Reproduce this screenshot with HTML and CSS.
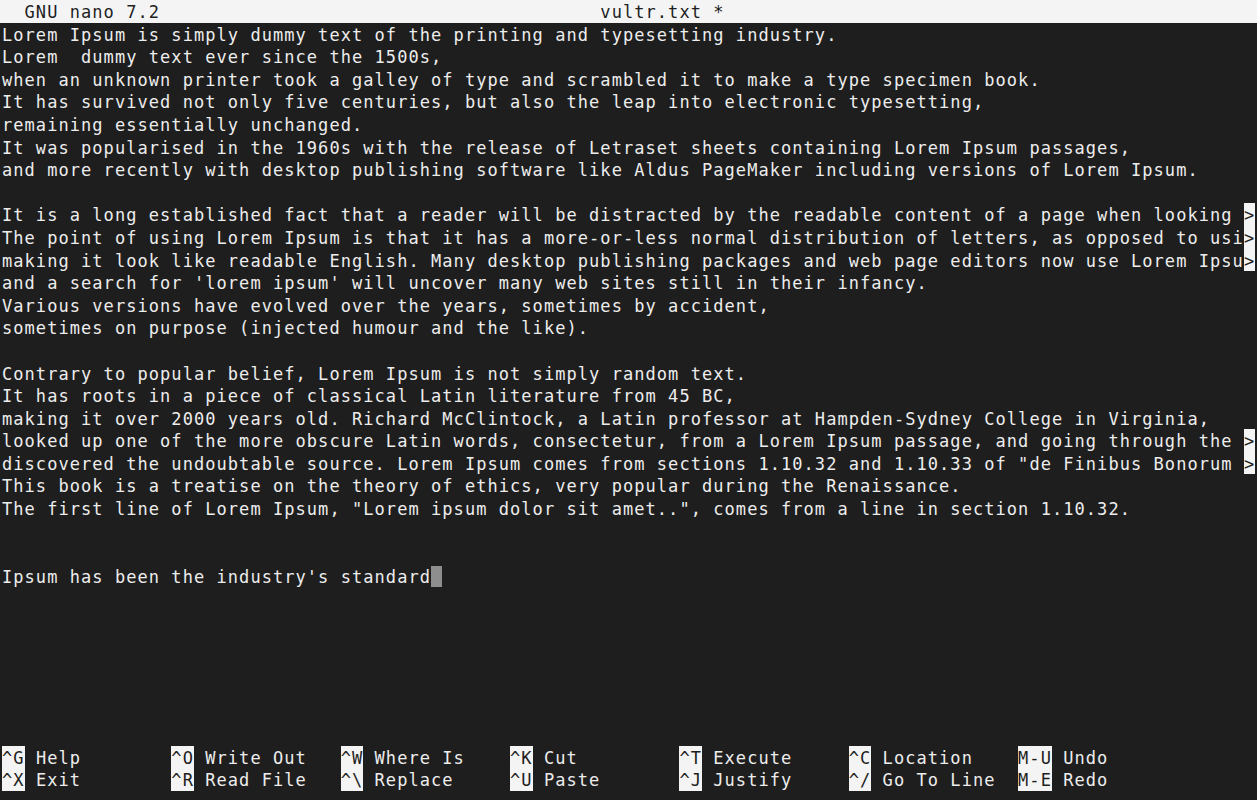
FILE: index.html
```html
<!DOCTYPE html>
<html lang="en">
<head>
<meta charset="utf-8">
<title>GNU nano 7.2 - vultr.txt</title>
<link rel="stylesheet" href="styles.css">
</head>
<body>
<main class="terminal">
  <header class="titlebar"><span class="title-line">  GNU nano 7.2                                       vultr.txt *</span></header>
  <section class="buffer">
    <div class="line">Lorem Ipsum is simply dummy text of the printing and typesetting industry.</div>
    <div class="line">Lorem  dummy text ever since the 1500s,</div>
    <div class="line">when an unknown printer took a galley of type and scrambled it to make a type specimen book.</div>
    <div class="line">It has survived not only five centuries, but also the leap into electronic typesetting,</div>
    <div class="line">remaining essentially unchanged.</div>
    <div class="line">It was popularised in the 1960s with the release of Letraset sheets containing Lorem Ipsum passages,</div>
    <div class="line">and more recently with desktop publishing software like Aldus PageMaker including versions of Lorem Ipsum.</div>
    <div class="line"></div>
    <div class="line">It is a long established fact that a reader will be distracted by the readable content of a page when looking <span class="more">&gt;</span></div>
    <div class="line">The point of using Lorem Ipsum is that it has a more-or-less normal distribution of letters, as opposed to usi<span class="more">&gt;</span></div>
    <div class="line">making it look like readable English. Many desktop publishing packages and web page editors now use Lorem Ipsu<span class="more">&gt;</span></div>
    <div class="line">and a search for 'lorem ipsum' will uncover many web sites still in their infancy.</div>
    <div class="line">Various versions have evolved over the years, sometimes by accident,</div>
    <div class="line">sometimes on purpose (injected humour and the like).</div>
    <div class="line"></div>
    <div class="line">Contrary to popular belief, Lorem Ipsum is not simply random text.</div>
    <div class="line">It has roots in a piece of classical Latin literature from 45 BC,</div>
    <div class="line">making it over 2000 years old. Richard McClintock, a Latin professor at Hampden-Sydney College in Virginia,</div>
    <div class="line">looked up one of the more obscure Latin words, consectetur, from a Lorem Ipsum passage, and going through the <span class="more">&gt;</span></div>
    <div class="line">discovered the undoubtable source. Lorem Ipsum comes from sections 1.10.32 and 1.10.33 of "de Finibus Bonorum <span class="more">&gt;</span></div>
    <div class="line">This book is a treatise on the theory of ethics, very popular during the Renaissance.</div>
    <div class="line">The first line of Lorem Ipsum, "Lorem ipsum dolor sit amet..", comes from a line in section 1.10.32.</div>
    <div class="line"></div>
    <div class="line"></div>
    <div class="line">Ipsum has been the industry's standard<span class="cursor"> </span></div>
  </section>
  <section class="help">
    <div class="help-item"><span class="key">^G</span> Help</div>
    <div class="help-item"><span class="key">^O</span> Write Out</div>
    <div class="help-item"><span class="key">^W</span> Where Is</div>
    <div class="help-item"><span class="key">^K</span> Cut</div>
    <div class="help-item"><span class="key">^T</span> Execute</div>
    <div class="help-item"><span class="key">^C</span> Location</div>
    <div class="help-item"><span class="key">M-U</span> Undo</div>
    <div class="help-item"><span class="key">^X</span> Exit</div>
    <div class="help-item"><span class="key">^R</span> Read File</div>
    <div class="help-item"><span class="key">^\</span> Replace</div>
    <div class="help-item"><span class="key">^U</span> Paste</div>
    <div class="help-item"><span class="key">^J</span> Justify</div>
    <div class="help-item"><span class="key">^/</span> Go To Line</div>
    <div class="help-item"><span class="key">M-E</span> Redo</div>
  </section>
</main>
</body>
</html>
```
FILE: styles.css
```css
:root {
  --cw: 11.29px;
  --rh: 22.6px;
  --lh: 25.6px;
  --bg: #1e1e1e;
  --fg: #ededed;
  --inv-bg: #f4f4f4;
  --inv-fg: #1e1e1e;
}

html, body {
  margin: 0;
  padding: 0;
  background: var(--bg);
  height: 100%;
  overflow: hidden;
}

.terminal {
  font-family: "DejaVu Sans Mono", "Liberation Mono", monospace;
  font-size: 17px;
  letter-spacing: 1.055px;
  line-height: var(--lh);
  color: var(--fg);
  display: flex;
  flex-direction: column;
  height: 100vh;
}

.titlebar {
  height: var(--rh);
  background: var(--inv-bg);
  color: var(--inv-fg);
  padding-left: 2px;
  white-space: pre;
  overflow: hidden;
}

.buffer {
  flex: 1;
  padding-left: 2px;
  display: grid;
  grid-auto-rows: var(--rh);
  align-content: start;
}

.line {
  white-space: pre;
  height: var(--rh);
}

.more {
  background: var(--inv-bg);
  color: var(--inv-fg);
  display: inline-block;
  height: var(--rh);
  line-height: var(--lh);
  vertical-align: top;
}

.cursor {
  display: inline-block;
  width: var(--cw);
  height: 21px;
  margin-top: 1px;
  vertical-align: top;
  background: #8e8e8e;
}

.help {
  padding-left: 2px;
  display: grid;
  grid-template-columns: repeat(7, calc(15 * var(--cw)));
  grid-auto-rows: var(--rh);
  margin-bottom: 9px;
}

.help-item {
  white-space: pre;
  height: var(--rh);
}

.key {
  background: var(--inv-bg);
  color: var(--inv-fg);
  display: inline-block;
  height: var(--rh);
  vertical-align: top;
}
```
